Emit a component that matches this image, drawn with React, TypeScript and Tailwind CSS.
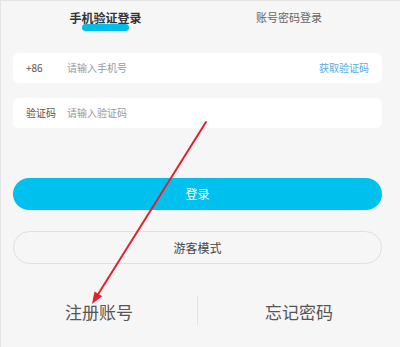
const font = { fontFamily: '"Noto Sans CJK SC", "Noto Sans", sans-serif' };

const Arrow = () => (
  <svg className="absolute left-0 top-0 pointer-events-none" width="400" height="347" viewBox="0 0 400 347">
    <line x1="205" y1="121" x2="97.4" y2="292.8" stroke="#e3202b" strokeWidth="2" strokeLinecap="round" />
    <polygon points="91,303 101.2,295.2 93.5,290.4" fill="#e3202b" />
  </svg>
);

const App = () => {
  return (
    <div
      className="relative w-[400px] h-[347px] overflow-hidden bg-[#f6f6f6] border-l border-t border-[#e4e4e4]"
      style={font}
    >
      {/* tabs */}
      <div className="grid grid-cols-[209px_158px] pt-[10px]">
        <div className="flex flex-col items-center">
          <span className="text-[12px] leading-[13px] font-bold text-[#333]">手机验证登录</span>
          <span className="w-[47px] h-[7px] rounded-full bg-[#00bde9]" />
        </div>
        <div className="flex justify-center">
          <span className="text-[11px] leading-[13px] text-[#666]">账号密码登录</span>
        </div>
      </div>

      <div className="ml-[12px] w-[369px] mt-[22px] flex flex-col">
        <div className="h-[30px] bg-white rounded-md flex items-center pl-[13px] pr-[13px] pb-[2px] text-[10px]">
          <span className="w-[41px] text-[#555]">+86</span>
          <input
            className="flex-1 outline-none bg-transparent text-[#333] placeholder:text-[#999]"
            placeholder="请输入手机号"
          />
          <span className="text-[#5aa9e6]">获取验证码</span>
        </div>
        <div className="mt-[15px] h-[30px] bg-white rounded-md flex items-center pl-[13px] pr-[13px] pb-[2px] text-[10px]">
          <span className="w-[41px] text-[#555]">验证码</span>
          <input
            className="flex-1 outline-none bg-transparent text-[#333] placeholder:text-[#999]"
            placeholder="请输入验证码"
          />
        </div>

        <button className="mt-[50px] h-[32px] rounded-full bg-[#00c1ee] text-white text-[12px]">登录</button>
        <button className="mt-[21px] h-[33px] rounded-full border border-[#e0e0e0] text-[#444] text-[12px]">
          游客模式
        </button>
      </div>

      <div className="mt-[32px] h-[29px] grid grid-cols-[196px_1px_1fr] items-center">
        <span className="text-center text-[17px] leading-[20px] pt-[3px] text-[#555]">注册账号</span>
        <span className="h-full bg-[#e2e2e2]" />
        <span className="text-center text-[17px] leading-[20px] pt-[3px] text-[#555]">忘记密码</span>
      </div>

      <Arrow />
    </div>
  );
};

export default App;
